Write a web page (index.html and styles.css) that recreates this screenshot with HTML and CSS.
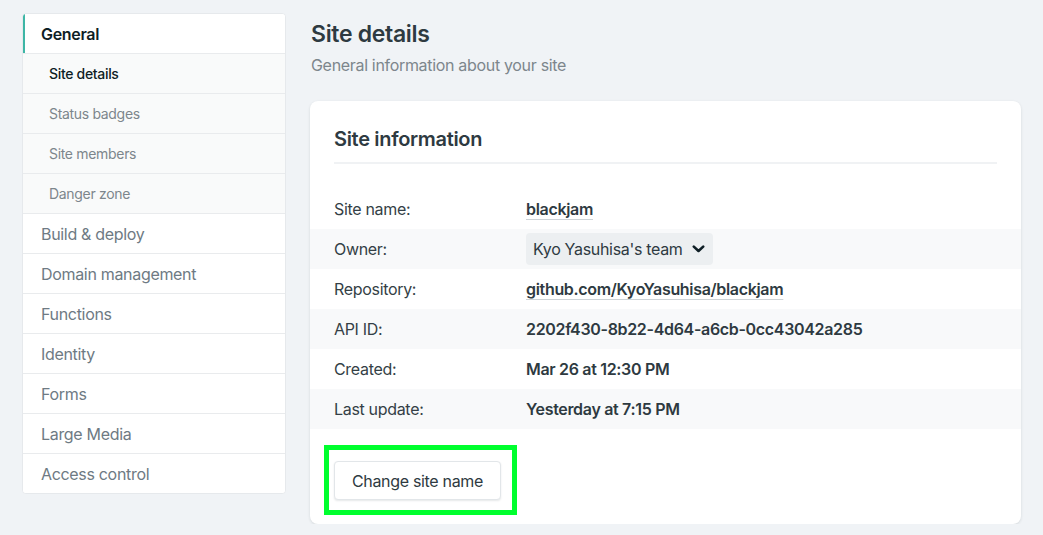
FILE: index.html
```html
<!DOCTYPE html>
<html lang="en">
<head>
<meta charset="utf-8">
<title>Site details</title>
<link rel="stylesheet" href="styles.css">
</head>
<body>
<div class="layout">
  <nav class="sidebar">
    <a class="nav-item nav-active">General</a>
    <a class="nav-sub nav-sub-active">Site details</a>
    <a class="nav-sub">Status badges</a>
    <a class="nav-sub">Site members</a>
    <a class="nav-sub">Danger zone</a>
    <a class="nav-item">Build &amp; deploy</a>
    <a class="nav-item">Domain management</a>
    <a class="nav-item">Functions</a>
    <a class="nav-item">Identity</a>
    <a class="nav-item">Forms</a>
    <a class="nav-item">Large Media</a>
    <a class="nav-item">Access control</a>
  </nav>
  <main class="main">
    <h1 class="page-title">Site details</h1>
    <p class="page-sub">General information about your site</p>
    <section class="card">
      <h2 class="card-title">Site information</h2>
      <dl class="info">
        <div class="info-row"><dt>Site name:</dt><dd><a class="link">blackjam</a></dd></div>
        <div class="info-row shaded"><dt>Owner:</dt><dd>
          <span class="select">Kyo Yasuhisa's team
            <svg class="chev" width="13" height="8" viewBox="0 0 13 8"><path d="M1.8 1.6 L6.5 6 L11.2 1.6" fill="none" stroke="#0e1e25" stroke-width="2.6" stroke-linecap="round" stroke-linejoin="round"/></svg>
          </span></dd></div>
        <div class="info-row"><dt>Repository:</dt><dd><a class="link">github.com/KyoYasuhisa/blackjam</a></dd></div>
        <div class="info-row shaded"><dt>API ID:</dt><dd>2202f430-8b22-4d64-a6cb-0cc43042a285</dd></div>
        <div class="info-row"><dt>Created:</dt><dd>Mar 26 at 12:30 PM</dd></div>
        <div class="info-row shaded"><dt>Last update:</dt><dd>Yesterday at 7:15 PM</dd></div>
      </dl>
      <div class="highlight">
        <button class="btn" type="button">Change site name</button>
      </div>
    </section>
  </main>
</div>
</body>
</html>
```
FILE: styles.css
```css
* { box-sizing: border-box; }
html, body { margin: 0; padding: 0; }
body {
  background: #f0f3f6;
  font-family: Inter, "Noto Sans", "Liberation Sans", sans-serif;
  color: #2e3a41;
  letter-spacing: -0.02em;
  -webkit-font-smoothing: antialiased;
}
.layout {
  display: flex;
  align-items: flex-start;
  gap: 24px;
  padding: 13px 22px 0 22px;
}
.sidebar {
  width: 264px;
  flex: none;
  display: flex;
  flex-direction: column;
  background: #fff;
  border: 1px solid #e6e9ec;
  border-radius: 4px;
  overflow: hidden;
}
.nav-item, .nav-sub {
  display: flex;
  align-items: center;
  height: 40px;
  border-bottom: 1px solid #e9ebed;
  text-decoration: none;
  cursor: pointer;
}
.sidebar a:last-child { border-bottom: none; height: 39px; }
.nav-item {
  padding-left: 18px;
  font-size: 16px;
  color: #6e7a83;
  background: #fff;
}
.nav-active {
  color: #0e1e25;
  font-weight: 600;
  box-shadow: inset 2px 0 0 #3eb6a6;
}
.nav-sub {
  padding-left: 26px;
  font-size: 14px;
  color: #7d868c;
  background: #f9fafa;
}
.nav-sub-active {
  color: #0e1e25;
  font-weight: 500;
}
.main {
  flex: 1;
  min-width: 0;
}
.page-title {
  margin: 5px 0 0 1px;
  font-size: 23px;
  line-height: 32px;
  font-weight: 600;
  color: #2e3a41;
}
.page-sub {
  margin: 3px 0 0 1px;
  font-size: 16px;
  line-height: 24px;
  color: #7d868c;
}
.card {
  margin-top: 24px;
  background: #fff;
  border-radius: 8px;
  box-shadow: 0 1px 3px rgba(14, 30, 37, 0.12);
  padding: 24px;
  width: 711px;
}
.card-title {
  margin: 2px 0 0 0;
  font-size: 20px;
  line-height: 24px;
  font-weight: 600;
  color: #2e3a41;
  padding-bottom: 11px;
  border-bottom: 2px solid #f0f2f4;
}
.info {
  margin: 25px -24px 0 -24px;
}
.info-row {
  display: flex;
  align-items: center;
  height: 40px;
  padding: 0 24px;
  font-size: 16px;
}
.info-row.shaded { background: #f8f9fa; }
.info-row dt {
  width: 192px;
  flex: none;
  color: #343f46;
}
.info-row dd {
  margin: 0;
  font-weight: 600;
  color: #2e3a41;
}
.link {
  color: #2e3a41;
  text-decoration: underline;
  text-decoration-color: #cdd3d7;
  text-underline-offset: 4px;
  text-decoration-thickness: 1px;
}
.select {
  display: inline-flex;
  align-items: center;
  gap: 9px;
  height: 32px;
  padding: 0 8px 0 7px;
  background: #eceff1;
  border-radius: 4px;
  font-weight: 400;
  color: #2e3a41;
}
.chev { display: block; }
.highlight {
  display: inline-block;
  margin: 16px 0 -15px -10px;
  border: 5px solid #00ff2e;
  padding: 11px 11px 10px 5px;
}
.btn {
  display: block;
  height: 39px;
  width: 167px;
  padding: 0;
  background: #fff;
  border: 1px solid #e2e6e9;
  border-radius: 4px;
  box-shadow: 0 1px 2px rgba(14, 30, 37, 0.1);
  font-family: inherit;
  font-size: 16px;
  font-weight: 400;
  letter-spacing: -0.02em;
  color: #2e3a41;
}
```
